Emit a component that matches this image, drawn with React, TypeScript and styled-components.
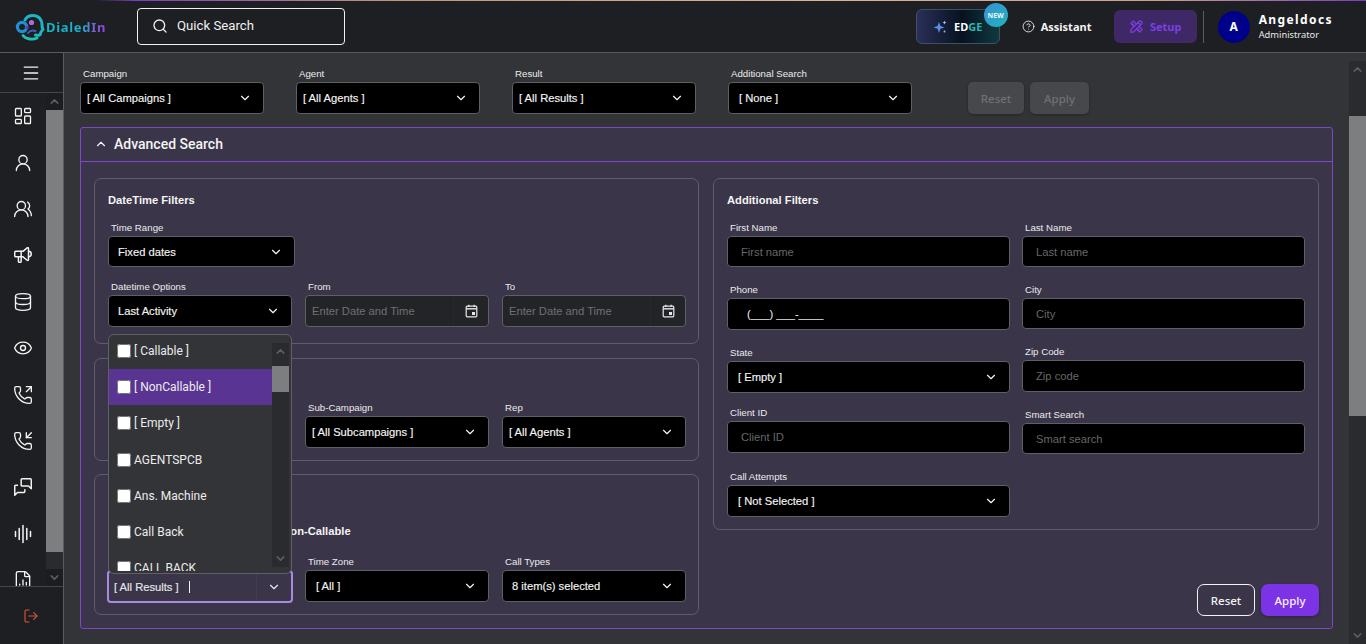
import { FC, ReactNode } from 'react';
import styled, { createGlobalStyle } from 'styled-components';
import {
  ChevronDown,
  ChevronUp,
  CircleHelp,
  Database,
  Eye,
  FileChartColumn,
  LayoutDashboard,
  LogOut,
  Menu,
  PhoneIncoming,
  PhoneOutgoing,
  Search,
  UserRound,
  UsersRound,
} from 'lucide-react';
import { TbMessages, TbSpeakerphone, TbTools } from 'react-icons/tb';

const GlobalStyle = createGlobalStyle`
  html, body {
    margin: 0;
    height: 100%;
    overflow: hidden;
    background: #333438;
  }
  * {
    box-sizing: border-box;
  }
`;

const VoiceIcon: FC = () => (
  <svg width="20" height="20" viewBox="0 0 20 20" fill="none" stroke="currentColor" strokeWidth="1.5" strokeLinecap="round">
    <path d="M2.5 7.5V12.5M6.2 4.5V15.5M10 1.5V18.5M13.8 4.5V15.5M17.5 7.5V12.5" />
  </svg>
);

const iconProps = { size: 20, strokeWidth: 1.6 };

const sideIcons = [
  <LayoutDashboard {...iconProps} />,
  <UserRound {...iconProps} />,
  <UsersRound {...iconProps} />,
  <TbSpeakerphone size={22} strokeWidth={1.6} />,
  <Database {...iconProps} />,
  <Eye {...iconProps} />,
  <PhoneOutgoing {...iconProps} />,
  <PhoneIncoming {...iconProps} />,
  <TbMessages size={22} strokeWidth={1.6} />,
  <VoiceIcon />,
  <FileChartColumn {...iconProps} />,
];

const resultOptions = [
  '[ Callable ]',
  '[ NonCallable ]',
  '[ Empty ]',
  'AGENTSPCB',
  'Ans. Machine',
  'Call Back',
  'CALL BACK',
];

const Logo: FC = () => (
  <svg width="30" height="28" viewBox="0 0 30 28" fill="none">
    <path
      d="M10 7C11.5 4 14.5 2.5 18 2.5C23.5 2.5 27 6.5 27 11.5C27 13.5 27 15 28 16.5C27 18 25.5 18.5 25.5 20.5C25.5 22.5 23 22.5 20.5 22"
      stroke="#1fb4c4"
      strokeWidth="3"
      strokeLinecap="round"
      strokeLinejoin="round"
    />
    <circle cx="7" cy="14" r="4.6" stroke="#1e8fd0" strokeWidth="3.2" />
    <circle cx="16.5" cy="9.5" r="2.6" fill="#b06ae0" />
    <circle cx="12" cy="14.5" r="1.8" fill="#5a3fb0" />
    <path d="M13 20C15 17.5 18 17 20.5 18" stroke="#3d5fc0" strokeWidth="2" strokeLinecap="round" />
    <path d="M8 22.5C11 26.5 18 27 22 25" stroke="#20c0b4" strokeWidth="2.8" strokeLinecap="round" />
  </svg>
);

const SparkIcon: FC = () => (
  <svg width="14" height="14" viewBox="0 0 14 14" fill="#5b8ee6">
    <path d="M6 2 7.4 6 11.5 7.4 7.4 8.8 6 13 4.6 8.8 0.5 7.4 4.6 6Z" />
    <path d="M11.5 0.5 12.1 2 13.5 2.6 12.1 3.2 11.5 4.6 10.9 3.2 9.5 2.6 10.9 2Z" fill="#a9b8ea" />
    <circle cx="11.5" cy="11.5" r="0.9" fill="#a9b8ea" />
  </svg>
);

const CalendarIcon: FC = () => (
  <svg width="13" height="14" viewBox="0 0 13 14" fill="none">
    <rect x="1.2" y="2.2" width="10.6" height="10.6" rx="1" stroke="#e8e8e8" strokeWidth="1.2" />
    <path d="M1.2 4.8H11.8" stroke="#e8e8e8" strokeWidth="1.4" />
    <path d="M3.8 0.8V3M9.2 0.8V3" stroke="#e8e8e8" strokeWidth="1.2" />
    <rect x="7" y="8" width="3" height="3" fill="#e8e8e8" />
  </svg>
);

interface IScrollProps {
  top: number;
  size: number;
  arrowBg?: string;
}

const ScrollBar: FC<IScrollProps> = ({ top, size, arrowBg }) => (
  <ScrollTrack>
    <ScrollArrow $bg={arrowBg}>
      <ChevronUp size={13} strokeWidth={3} />
    </ScrollArrow>
    <ScrollThumbArea>
      <ScrollThumb $top={top} $size={size} />
    </ScrollThumbArea>
    <ScrollArrow $bg={arrowBg}>
      <ChevronDown size={13} strokeWidth={3} />
    </ScrollArrow>
  </ScrollTrack>
);

interface IFieldProps {
  label: string;
  children: ReactNode;
  top?: number;
}

const Field: FC<IFieldProps> = ({ label, children, top }) => (
  <FieldWrap $top={top}>
    <FieldLabel>{label}</FieldLabel>
    {children}
  </FieldWrap>
);

interface ISelectProps {
  value: string;
  width?: number;
  height?: number;
  pad?: number;
}

const SelectBox: FC<ISelectProps> = ({ value, width, height, pad }) => (
  <Select $width={width} $height={height} $pad={pad}>
    <span>{value}</span>
    <ChevronDown size={14} strokeWidth={2} />
  </Select>
);

const DateInput: FC = () => (
  <DateBox>
    <DatePlaceholder>Enter Date and Time</DatePlaceholder>
    <DateIconCell>
      <CalendarIcon />
    </DateIconCell>
  </DateBox>
);

const App: FC = () => {
  return (
    <>
      <GlobalStyle />
      <Page>
        <TopStrip />
        <TopBar>
          <Brand>
            <Logo />
            <BrandName>DialedIn</BrandName>
          </Brand>
          <QuickSearch>
            <Search size={16} strokeWidth={2} />
            <span>Quick Search</span>
          </QuickSearch>
          <TopActions>
            <EdgeButton>
              <SparkIcon />
              <EdgeLabel>
                ED<span>GE</span>
              </EdgeLabel>
              <NewBadge>NEW</NewBadge>
            </EdgeButton>
            <Assistant>
              <CircleHelp size={13} strokeWidth={1.6} />
              <span>Assistant</span>
            </Assistant>
            <SetupButton>
              <TbTools size={15} />
              <span>Setup</span>
            </SetupButton>
            <Divider />
            <Avatar>A</Avatar>
            <UserBlock>
              <UserName>Angeldocs</UserName>
              <UserRole>Administrator</UserRole>
            </UserBlock>
          </TopActions>
        </TopBar>
        <Body>
          <Sidebar>
            <MenuRow>
              <Menu size={20} strokeWidth={1.6} />
            </MenuRow>
            <SideMiddle>
              <IconList>
                {sideIcons.map((icon, index) => (
                  <IconCell key={index}>{icon}</IconCell>
                ))}
              </IconList>
              <ScrollBar top={0} size={442} arrowBg="#1c1d20" />
            </SideMiddle>
            <SideFooter>
              <LogOut size={16} strokeWidth={1.7} />
            </SideFooter>
          </Sidebar>
          <Main>
            <Content>
              <FilterBar>
                <Field label="Campaign">
                  <SelectBox value="[ All Campaigns ]" width={184} pad={6} />
                </Field>
                <Field label="Agent">
                  <SelectBox value="[ All Agents ]" width={184} pad={6} />
                </Field>
                <Field label="Result">
                  <SelectBox value="[ All Results ]" width={184} pad={6} />
                </Field>
                <Field label="Additional Search">
                  <SelectBox value="[ None ]" width={184} pad={10} />
                </Field>
                <BarButtons>
                  <DisabledButton $width={56}>Reset</DisabledButton>
                  <DisabledButton $width={59}>Apply</DisabledButton>
                </BarButtons>
              </FilterBar>
              <Panel>
                <PanelHeader>
                  <ChevronUp size={14} strokeWidth={2} />
                  <PanelTitle>Advanced Search</PanelTitle>
                </PanelHeader>
                <PanelBody>
                  <LeftColumn>
                    <Card $height={166}>
                      <CardTitle>DateTime Filters</CardTitle>
                      <Field label="Time Range" top={14}>
                        <SelectBox value="Fixed dates" width={187} height={31} />
                      </Field>
                      <ThreeCols $top={13}>
                        <Field label="Datetime Options">
                          <SelectBox value="Last Activity" />
                        </Field>
                        <Field label="From">
                          <DateInput />
                        </Field>
                        <Field label="To">
                          <DateInput />
                        </Field>
                      </ThreeCols>
                    </Card>
                    <Card $height={103}>
                      <CardTitle>Campaign Filters</CardTitle>
                      <ThreeCols $top={14}>
                        <Field label="Campaign">
                          <SelectBox value="[ All Campaigns ]" pad={6} />
                        </Field>
                        <Field label="Sub-Campaign">
                          <SelectBox value="[ All Subcampaigns ]" pad={6} />
                        </Field>
                        <Field label="Rep">
                          <SelectBox value="[ All Agents ]" pad={6} />
                        </Field>
                      </ThreeCols>
                    </Card>
                    <Card $height={141}>
                      <CardTitle>Result Filters</CardTitle>
                      <ToggleText>Callable / Non-Callable</ToggleText>
                      <ThreeCols $top={17}>
                        <AnchoredField>
                          <FieldLabel>Result</FieldLabel>
                          <FocusedSelect>
                            <FocusedValue>[ All Results ]</FocusedValue>
                            <Caret />
                            <FocusedArrow>
                              <ChevronDown size={14} strokeWidth={2} />
                            </FocusedArrow>
                          </FocusedSelect>
                          <Dropdown>
                            <OptionList>
                              {resultOptions.map((option) => (
                                <OptionRow key={option} $active={option === '[ NonCallable ]'}>
                                  <Check type="checkbox" readOnly />
                                  <span>{option}</span>
                                </OptionRow>
                              ))}
                            </OptionList>
                            <DropdownScroll>
                              <ScrollBar top={6} size={26} />
                            </DropdownScroll>
                          </Dropdown>
                        </AnchoredField>
                        <Field label="Time Zone">
                          <SelectBox value="[ All ]" pad={10} />
                        </Field>
                        <Field label="Call Types">
                          <SelectBox value="8 item(s) selected" />
                        </Field>
                      </ThreeCols>
                    </Card>
                  </LeftColumn>
                  <RightColumn>
                    <Card $height={352}>
                      <CardTitle>Additional Filters</CardTitle>
                      <TwoCols>
                        <FieldColumn>
                          <Field label="First Name">
                            <TextInput $height={31}>First name</TextInput>
                          </Field>
                          <Field label="Phone" top={16}>
                            <PhoneInput>(___) ___-____</PhoneInput>
                          </Field>
                          <Field label="State" top={16}>
                            <SelectBox value="[ Empty ]" pad={10} />
                          </Field>
                          <Field label="Client ID" top={13}>
                            <TextInput>Client ID</TextInput>
                          </Field>
                          <Field label="Call Attempts" top={17}>
                            <SelectBox value="[ Not Selected ]" pad={10} />
                          </Field>
                        </FieldColumn>
                        <FieldColumn>
                          <Field label="Last Name">
                            <TextInput $height={31}>Last name</TextInput>
                          </Field>
                          <Field label="City" top={16}>
                            <TextInput $height={31}>City</TextInput>
                          </Field>
                          <Field label="Zip Code" top={16}>
                            <TextInput>Zip code</TextInput>
                          </Field>
                          <Field label="Smart Search" top={16}>
                            <TextInput $height={31}>Smart search</TextInput>
                          </Field>
                        </FieldColumn>
                      </TwoCols>
                    </Card>
                    <PanelActions>
                      <GhostButton>Reset</GhostButton>
                      <PrimaryButton>Apply</PrimaryButton>
                    </PanelActions>
                  </RightColumn>
                </PanelBody>
              </Panel>
            </Content>
            <MainScroll>
              <ScrollBar top={38} size={300} />
            </MainScroll>
          </Main>
        </Body>
      </Page>
    </>
  );
};

export default App;

const Page = styled.div`
  position: relative;
  display: flex;
  flex-direction: column;
  height: 644px;
  overflow: hidden;
  font-family: 'Liberation Sans', Arial, sans-serif;
  color: #ffffff;
`;

const TopStrip = styled.div`
  height: 1px;
  flex: none;
  background: linear-gradient(90deg, #1e1f22 0%, #1e1f22 7%, #7a3fc0 10%, #b9977f 28%, #d8b59c 60%, #c9a090 85%, #7a3fc0 100%);
`;

const TopBar = styled.header`
  flex: none;
  height: 52px;
  display: flex;
  align-items: center;
  background: #1e1f22;
  border-bottom: 1px solid #5a5b5f;
  padding-left: 15px;
`;

const Brand = styled.div`
  width: 122px;
  display: flex;
  align-items: center;
  gap: 1px;
`;

const BrandName = styled.span`
  font-family: 'Noto Sans', sans-serif;
  font-size: 13px;
  font-weight: 700;
  letter-spacing: 0.7px;
  background: linear-gradient(90deg, #17b5c8 0%, #1cb0cc 60%, #8b4fd8 85%);
  -webkit-background-clip: text;
  background-clip: text;
  color: transparent;
`;

const QuickSearch = styled.div`
  width: 208px;
  height: 37px;
  display: flex;
  align-items: center;
  gap: 9px;
  padding: 0 0 2px 14px;
  border: 1px solid #f2f2f2;
  border-radius: 4px;
  font-family: Roboto, sans-serif;
  font-size: 13.2px;
  color: #f0f0f0;
`;

const TopActions = styled.div`
  margin-left: auto;
  display: flex;
  align-items: center;
  padding-right: 33px;
`;

const EdgeButton = styled.div`
  position: relative;
  width: 84px;
  height: 35px;
  display: flex;
  align-items: center;
  justify-content: center;
  gap: 7px;
  border: 1px solid #3b5166;
  border-radius: 6px;
  background: linear-gradient(90deg, #2a2f58 0%, #06121f 55%, #0f3a3f 100%);
`;

const EdgeLabel = styled.span`
  font-family: 'Noto Sans', sans-serif;
  font-size: 11px;
  font-weight: 700;
  color: #ffffff;

  span {
    color: #2fb7b0;
  }
`;

const NewBadge = styled.span`
  position: absolute;
  top: -7px;
  right: -9px;
  width: 24px;
  height: 24px;
  display: grid;
  place-content: center;
  border-radius: 50%;
  background: linear-gradient(135deg, #3a8fd8 0%, #1fb5b8 100%);
  font-family: 'Noto Sans', sans-serif;
  font-size: 7px;
  font-weight: 700;
  color: #e8f6f8;
`;

const Assistant = styled.div`
  margin-left: 22px;
  width: 92px;
  display: flex;
  align-items: center;
  gap: 6px;
  font-family: 'Noto Sans', sans-serif;
  font-size: 11px;
  font-weight: 700;
  color: #f4f4f4;
`;

const SetupButton = styled.div`
  width: 83px;
  height: 33px;
  display: flex;
  align-items: center;
  justify-content: center;
  gap: 6px;
  border-radius: 6px;
  background: #3e2866;
  font-family: 'Noto Sans', sans-serif;
  font-size: 11px;
  font-weight: 700;
  color: #7c3fe0;
`;

const Divider = styled.div`
  width: 1px;
  height: 32px;
  margin: 0 14px 0 6px;
  background: #5a5b5f;
`;

const Avatar = styled.div`
  width: 32px;
  height: 32px;
  display: grid;
  place-content: center;
  border-radius: 50%;
  background: #00008b;
  font-family: 'Noto Sans', sans-serif;
  font-size: 12px;
  font-weight: 700;
`;

const UserBlock = styled.div`
  margin: -1px 0 0 9px;
  display: flex;
  flex-direction: column;
  gap: 2px;
  font-family: 'Noto Sans', sans-serif;
`;

const UserName = styled.span`
  font-size: 12px;
  line-height: 15px;
  font-weight: 700;
  letter-spacing: 1.4px;
`;

const UserRole = styled.span`
  font-size: 9.3px;
  line-height: 12px;
  color: #e8e8e8;
`;

const Body = styled.div`
  flex: 1;
  min-height: 0;
  display: flex;
`;

const Sidebar = styled.aside`
  flex: none;
  width: 64px;
  display: flex;
  flex-direction: column;
  background: #1e1f22;
  border-right: 1px solid #5a5b5f;
`;

const MenuRow = styled.div`
  flex: none;
  height: 40px;
  display: grid;
  place-content: center;
  border-bottom: 1px solid #45464a;
  color: #f2f2f2;
  padding-right: 1px;
`;

const SideMiddle = styled.div`
  flex: 1;
  min-height: 0;
  display: flex;
`;

const IconList = styled.div`
  flex: 1;
  height: 493px;
  overflow: hidden;
`;

const IconCell = styled.div`
  height: 46.4px;
  display: grid;
  place-content: center;
  color: #f4f4f4;
`;

const SideFooter = styled.div`
  flex: none;
  height: 58px;
  display: grid;
  place-content: center;
  border-top: 1px solid #45464a;
  color: #d9543a;
  padding-right: 2px;
`;

const ScrollTrack = styled.div`
  flex: none;
  width: 17px;
  height: 100%;
  display: flex;
  flex-direction: column;
  background: #2a2b2e;
`;

const ScrollArrow = styled.div<{ $bg?: string }>`
  flex: none;
  height: 17px;
  display: grid;
  place-content: center;
  background: ${(p) => p.$bg ?? '#2a2b2e'};
  color: #5c5d61;
`;

const ScrollThumbArea = styled.div`
  flex: 1;
  min-height: 0;
`;

const ScrollThumb = styled.div<{ $top: number; $size: number }>`
  margin-top: ${(p) => p.$top}px;
  height: ${(p) => p.$size}px;
  background: #7d7e80;
`;

const Main = styled.main`
  flex: 1;
  min-width: 0;
  display: flex;
  background: #333438;
`;

const Content = styled.div`
  flex: 1;
  min-width: 0;
  padding: 14px 16px 0;
  overflow: hidden;
`;

const MainScroll = styled.div`
  flex: none;
  width: 17px;
  padding-top: 8px;
`;

const FilterBar = styled.div`
  display: flex;
  align-items: flex-end;
  gap: 32px;
`;

const BarButtons = styled.div`
  display: flex;
  gap: 6px;
  margin-left: 24px;
`;

const DisabledButton = styled.div<{ $width: number }>`
  width: ${(p) => p.$width}px;
  height: 32px;
  display: grid;
  place-content: center;
  border-radius: 5px;
  background: #47484b;
  box-shadow: 0 1px 3px rgba(0, 0, 0, 0.3);
  font-family: 'Noto Sans', sans-serif;
  font-size: 11.5px;
  font-weight: 500;
  color: #6f7073;
`;

const FieldWrap = styled.div<{ $top?: number }>`
  display: flex;
  flex-direction: column;
  margin-top: ${(p) => p.$top ?? 0}px;
`;

const FieldLabel = styled.label`
  height: 13px;
  margin-bottom: 2px;
  padding-left: 3px;
  font-size: 9.7px;
  line-height: 14px;
  color: #ececec;
`;

const Select = styled.div<{ $width?: number; $height?: number; $pad?: number }>`
  width: ${(p) => (p.$width ? `${p.$width}px` : '100%')};
  height: ${(p) => p.$height ?? 32}px;
  display: flex;
  align-items: center;
  justify-content: space-between;
  padding: 0 11px 0 ${(p) => p.$pad ?? 9}px;
  background: #000000;
  border: 1px solid #5f5f64;
  border-radius: 4px;
  font-size: 11.2px;
  color: #f4f4f4;
  -webkit-text-stroke: 0.15px #f4f4f4;
`;

const DateBox = styled.div`
  height: 32px;
  display: flex;
  align-items: stretch;
  background: #232427;
  border: 1px solid #5f5f64;
  border-radius: 4px;
`;

const DatePlaceholder = styled.span`
  flex: 1;
  display: flex;
  align-items: center;
  padding-left: 6px;
  font-size: 11.2px;
  color: #6f7073;
`;

const DateIconCell = styled.span`
  flex: none;
  width: 35px;
  display: grid;
  place-content: center;
  border-left: 1px solid #27282b;
`;

const Panel = styled.section`
  margin-top: 13px;
  height: 502px;
  background: #3a3549;
  border: 1px solid #7c47c8;
  border-radius: 3px;
`;

const PanelHeader = styled.div`
  height: 34px;
  display: flex;
  align-items: center;
  gap: 6px;
  padding: 0 0 2px 13px;
  border-bottom: 1px solid #7c47c8;
  color: #f4f4f4;
`;

const PanelTitle = styled.span`
  font-family: Roboto, sans-serif;
  font-size: 14px;
  font-weight: 500;
`;

const PanelBody = styled.div`
  display: grid;
  grid-template-columns: 605px 606px;
  gap: 14px;
  padding: 16px 13px 0;
`;

const LeftColumn = styled.div`
  display: flex;
  flex-direction: column;
  gap: 13.5px;
`;

const RightColumn = styled.div`
  display: flex;
  flex-direction: column;
  justify-content: space-between;
  height: 438px;
`;

const Card = styled.div<{ $height: number }>`
  height: ${(p) => p.$height}px;
  padding: 14px 13px 0;
  border: 1px solid #5f5d68;
  border-radius: 7px;
`;

const CardTitle = styled.div`
  height: 14px;
  font-size: 11.2px;
  line-height: 14px;
  font-weight: 700;
  color: #f4f4f4;
`;

const ThreeCols = styled.div<{ $top: number }>`
  display: grid;
  grid-template-columns: repeat(3, 184px);
  gap: 13px;
  margin-top: ${(p) => p.$top}px;
`;

const ToggleText = styled.div`
  margin: 21px 0 0 122px;
  height: 14px;
  font-size: 11.2px;
  line-height: 14px;
  font-weight: 700;
  color: #f4f4f4;
`;

const TwoCols = styled.div`
  display: grid;
  grid-template-columns: 283px 283px;
  gap: 12px;
  margin-top: 14px;
`;

const FieldColumn = styled.div`
  display: flex;
  flex-direction: column;
`;

const TextInput = styled.div<{ $height?: number }>`
  height: ${(p) => p.$height ?? 32}px;
  display: flex;
  align-items: center;
  padding-left: 13px;
  background: #000000;
  border: 1px solid #5f5f64;
  border-radius: 4px;
  font-size: 11.2px;
  color: #66676a;
`;

const PhoneInput = styled(TextInput)`
  padding-left: 19px;
  color: #f4f4f4;
`;

const PanelActions = styled.div`
  display: flex;
  justify-content: flex-end;
  gap: 6px;
`;

const GhostButton = styled.div`
  width: 58px;
  height: 32px;
  display: grid;
  place-content: center;
  border: 1px solid #f2f2f2;
  border-radius: 7px;
  font-family: 'Noto Sans', sans-serif;
  font-size: 11.5px;
  font-weight: 500;
  color: #f2f2f2;
`;

const PrimaryButton = styled.div`
  width: 58px;
  height: 32px;
  display: grid;
  place-content: center;
  border-radius: 7px;
  background: #7c33e6;
  box-shadow: 0 1px 3px rgba(0, 0, 0, 0.3);
  font-family: 'Noto Sans', sans-serif;
  font-size: 11.5px;
  font-weight: 500;
  color: #f6f0ff;
`;

const AnchoredField = styled.div`
  position: relative;
  display: flex;
  flex-direction: column;
`;

const FocusedSelect = styled.div`
  height: 33px;
  margin: 0 -1px;
  display: flex;
  align-items: center;
  padding-left: 5px;
  border: 2px solid #a78bdc;
  border-radius: 4px;
  font-size: 11.2px;
  color: #e8e8e8;
  -webkit-text-stroke: 0.15px #e8e8e8;
`;

const FocusedValue = styled.span`
  padding-right: 4px;
  border-radius: 2px;
  background: #383347;
`;

const Caret = styled.span`
  width: 1px;
  height: 12px;
  margin-left: 6px;
  background: #f4f4f4;
`;

const FocusedArrow = styled.span`
  margin-left: auto;
  width: 35px;
  height: 100%;
  display: grid;
  place-content: center;
  border-left: 1px solid #423d51;
`;

const Dropdown = styled.div`
  position: absolute;
  left: 0;
  bottom: 29px;
  width: 184px;
  height: 240px;
  display: flex;
  background: #333438;
  border: 1px solid #5f5f64;
  border-radius: 6px;
  overflow: hidden;
  z-index: 5;
`;

const OptionList = styled.div`
  flex: none;
  width: 163px;
  height: 100%;
  margin-top: -2px;
  overflow: hidden;
`;

const OptionRow = styled.div<{ $active: boolean }>`
  height: 36.2px;
  display: flex;
  align-items: center;
  gap: 3px;
  padding-left: 8px;
  background: ${(p) => (p.$active ? '#5a3492' : 'transparent')};
  font-family: Roboto, sans-serif;
  font-size: 12px;
  color: #ececec;
`;

const Check = styled.input`
  width: 14px;
  height: 14px;
  margin: 0;
  flex: none;
`;

const DropdownScroll = styled.div`
  flex: none;
  height: 100%;
  padding: 8px 0 6px;
`;
